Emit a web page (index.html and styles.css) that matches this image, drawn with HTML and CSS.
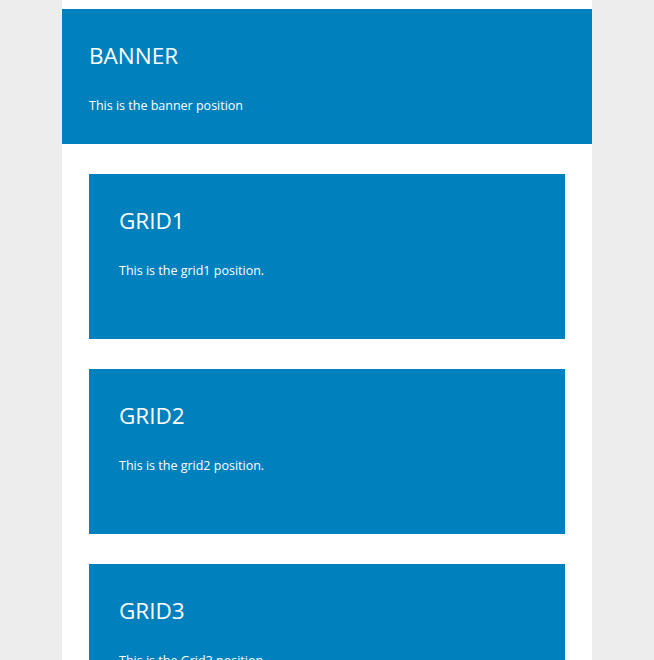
FILE: index.html
```html
<!DOCTYPE html>
<html>
<head>
<meta charset="utf-8">
<link rel="stylesheet" href="styles.css">
</head>
<body>
<div class="page">
  <div class="banner">
    <h2 class="title">BANNER</h2>
    <p class="text">This is the banner position</p>
  </div>
  <div class="grids">
    <div class="grid">
      <h2 class="title">GRID1</h2>
      <p class="text">This is the grid1 position.</p>
    </div>
    <div class="grid">
      <h2 class="title">GRID2</h2>
      <p class="text">This is the grid2 position.</p>
    </div>
    <div class="grid">
      <h2 class="title">GRID3</h2>
      <p class="text">This is the Grid3 position.</p>
    </div>
  </div>
</div>
</body>
</html>
```
FILE: styles.css
```css
html, body {
  margin: 0;
  padding: 0;
  background: #ededed;
  font-family: "Open Sans", "DejaVu Sans", sans-serif;
  color: #fff;
}
.page {
  width: 530px;
  margin: 0 auto;
  background: #fff;
  padding-top: 9px;
  min-height: 700px;
}
.banner {
  background: #0081bd;
  padding: 33px 27px 30px;
  box-sizing: border-box;
  height: 135px;
}
.title {
  margin: 0;
  font-size: 22.5px;
  line-height: 28px;
  font-weight: 400;
}
.text {
  margin: 25px 0 0;
  font-size: 12.5px;
  line-height: 21px;
}
.grids {
  display: flex;
  flex-direction: column;
  gap: 30px;
  padding: 30px 27px 0;
}
.grid {
  background: #0081bd;
  height: 165px;
  box-sizing: border-box;
  padding: 33px 30px 0;
}
```
